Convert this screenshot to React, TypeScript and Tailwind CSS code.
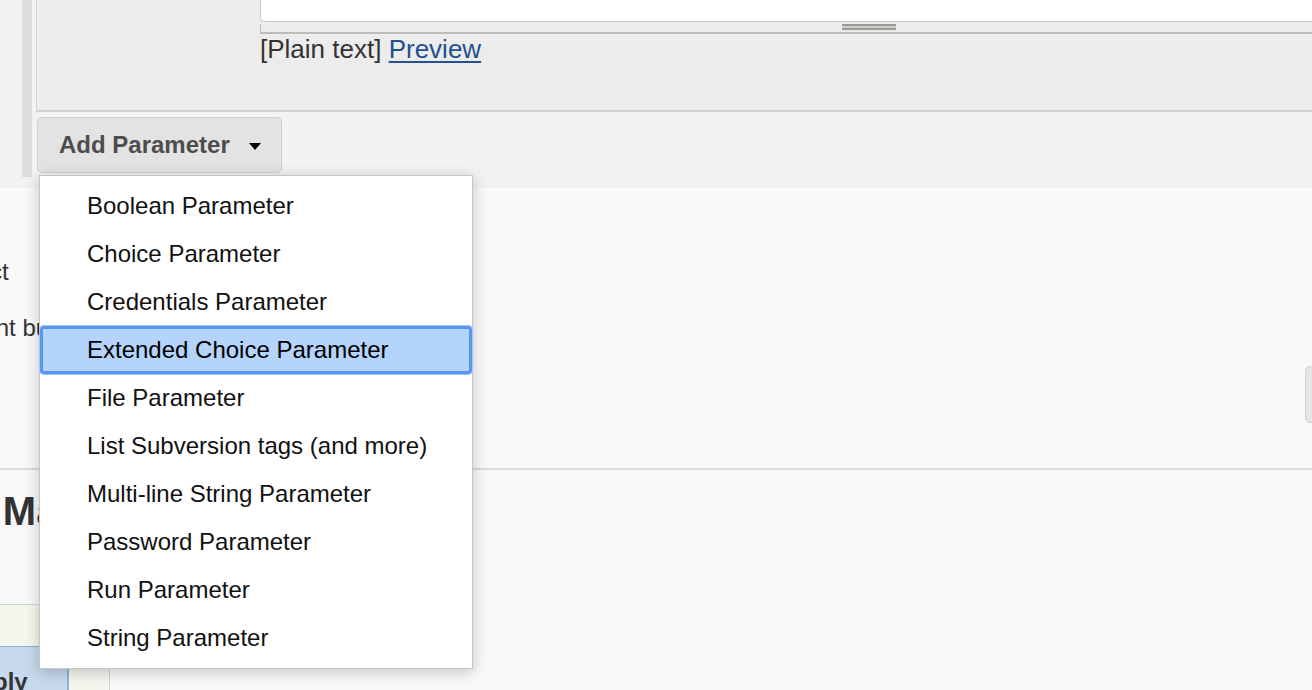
const paramTypes = [
  "Boolean Parameter",
  "Choice Parameter",
  "Credentials Parameter",
  "Extended Choice Parameter",
  "File Parameter",
  "List Subversion tags (and more)",
  "Multi-line String Parameter",
  "Password Parameter",
  "Run Parameter",
  "String Parameter",
];

function AddParameterMenu({ active }: { active: string }) {
  return (
    <div className="absolute left-[39px] top-[175px] w-[434px] bg-white border border-[#c6c6c6] py-[6px] shadow-[0_3px_14px_rgba(0,0,0,0.22)]">
      {paramTypes.map((t) => (
        <div
          key={t}
          className={
            t === active
              ? "h-[48px] flex items-center pl-[47px] text-[24px] text-black bg-[#b4d4fb] rounded-[4px] inset-ring-[3px] inset-ring-[#5797f3] ring-1 ring-[#a3c6f7]"
              : "h-[48px] flex items-center pl-[47px] text-[24px] text-[#111]"
          }
        >
          {t}
        </div>
      ))}
    </div>
  );
}

export default function App() {
  return (
    <div className="relative w-[1312px] h-[690px] overflow-hidden bg-[#f9f9f9] font-['Liberation_Sans',Arial,sans-serif] text-[#333]">
      {/* parameter block */}
      <div className="flex h-[188px] bg-[#f2f2f2]">
        <div className="w-[22px] shrink-0" />
        <div className="w-[10px] h-[177px] shrink-0 bg-[#dcdcdc]" />
        <div className="w-[4px] shrink-0" />
        <div className="flex-1 flex flex-col">
          <div className="h-[112px] bg-[#ececec] border-l border-b-2 border-[#d3d3d3] pl-[223px]">
            <div className="h-[22px] bg-white border-l border-b border-[#c9c9c9] rounded-bl-[5px]" />
            <div className="h-[10px] border-l border-b-2 border-[#bcbdb6] bg-[#ececec]">
              <div className="ml-[581px] mt-[2px] w-[54px] h-[6px] border-t-2 border-b-2 border-[#9a9b95] bg-[#cfcfcb]" />
            </div>
            <div className="leading-[30px] text-[26px] text-[#333]">
              [Plain text]{" "}
              <a className="text-[#23508f] underline underline-offset-[3px]">Preview</a>
            </div>
          </div>
          <div className="mt-[5px] pl-[1px]">
            <button className="h-[56px] w-[245px] flex items-center pl-[21px] rounded-[5px] border border-[#d0d0d0] bg-[#e3e3e3] text-[24px] font-bold text-[#4d4d4d]">
              Add Parameter
              <span className="ml-[19px] mt-[2px] w-0 h-0 border-x-[6.5px] border-x-transparent border-t-[7px] border-t-black" />
            </button>
          </div>
        </div>
      </div>

      {/* other job options */}
      <div className="mt-[68px] leading-[32px] text-[24px] whitespace-nowrap">
        <div className="-ml-[194px]">Disable this project</div>
        <div className="mt-[24px] -ml-[191px]">Execute concurrent builds if necessary</div>
      </div>
      <div className="mt-[22px] flex justify-end">
        <button className="h-[57px] w-[160px] -mr-[153px] shrink-0 rounded-[5px] border border-[#d0d0d0] bg-[#e5e5e5] pl-[30px] text-left text-[24px] font-bold text-[#4d4d4d]">
          Advanced...
        </button>
      </div>
      <div className="mt-[45px] border-b-2 border-[#dcdcdc]" />
      <h2 className="mt-[17px] -ml-[255px] leading-[48px] text-[40px] font-bold text-[#333] whitespace-nowrap">
        Source Code Management
      </h2>

      {/* bottom bar */}
      <div className="mt-[69px] w-[110px] border-t border-[#c4dccb]">
        <div className="h-[41px] bg-[#f5f6ee] border-r border-[#c4dccb]" />
        <div className="flex h-[46px] border-t border-[#8fb2d9]">
          <div className="w-[69px] bg-[#c7d9ec] border-r-2 border-[#8fb2d9] pt-[17px] text-[24px] font-bold text-[#333] whitespace-nowrap overflow-hidden">
            <span className="-ml-[39px] inline-block">Apply</span>
          </div>
          <div className="flex-1 bg-[#f5f6ee] border-r border-[#c4dccb]" />
        </div>
      </div>

      <AddParameterMenu active="Extended Choice Parameter" />
    </div>
  );
}
